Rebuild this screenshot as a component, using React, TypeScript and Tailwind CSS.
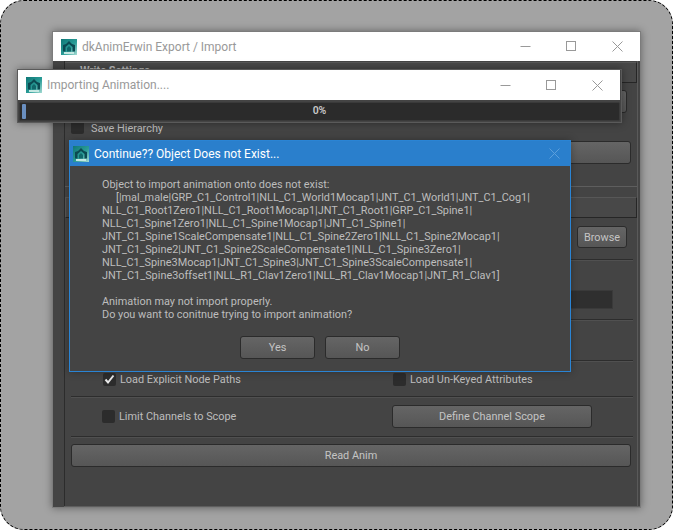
const bodyFont = "font-['Roboto','Noto_Sans',sans-serif]";

function AppIcon() {
  return (
    <svg width="16" height="16" viewBox="0 0 16 16" className="shrink-0">
      <defs>
        <linearGradient id="tealGrad" x1="0" y1="0" x2="1" y2="1">
          <stop offset="0" stopColor="#0f7776" />
          <stop offset="0.55" stopColor="#2a9c97" />
          <stop offset="1" stopColor="#a6dbd3" />
        </linearGradient>
      </defs>
      <rect width="16" height="16" fill="url(#tealGrad)" />
      <path d="M2 12.5V6l3-1 3-3 3 3 3 1v6.5h-2.5V8L8 5 4.5 8v4.5z" fill="#0c4a52" />
      <path d="M6 12.5V9l2-2 2 2v3.5z" fill="#11676a" />
      <rect x="3" y="13" width="10" height="2" fill="#c4e8e2" />
    </svg>
  );
}

function CloseGlyph({ color }: { color: string }) {
  return (
    <svg width="11" height="11" viewBox="0 0 11 11"><path d="M0.5 0.5L10.5 10.5M10.5 0.5L0.5 10.5" stroke={color} strokeWidth="1" /></svg>
  );
}

function WinControls({ color = "#999999" }: { color?: string }) {
  return (
    <div className="flex items-center">
      <div className="w-[45px] flex justify-center">
        <svg width="11" height="11" viewBox="0 0 11 11"><path d="M0.5 5.5H10.5" stroke={color} strokeWidth="1" /></svg>
      </div>
      <div className="w-[46px] flex justify-center">
        <svg width="11" height="11" viewBox="0 0 11 11"><rect x="0.5" y="0.5" width="9" height="9" fill="none" stroke={color} strokeWidth="1" /></svg>
      </div>
      <div className="w-[46px] flex justify-center">
        <CloseGlyph color={color} />
      </div>
    </div>
  );
}

function Btn({ children, className = "" }: { children?: React.ReactNode; className?: string }) {
  return (
    <div className={`flex items-center justify-center pt-[2px] rounded-[3px] border border-[#2b2b2b] bg-gradient-to-b from-[#656565] to-[#565656] text-[10.9px] text-[#c4c4c4] ${className}`}>
      {children}
    </div>
  );
}

function Check({ checked = false }: { checked?: boolean }) {
  return (
    <div className="w-[13px] h-[13px] rounded-[2px] bg-[#2c2c2c] flex items-center justify-center shrink-0">
      {checked && (
        <svg width="11" height="11" viewBox="0 0 11 11">
          <path d="M1.5 5.5L4 8.5L9.5 1.5" fill="none" stroke="#e8e8e8" strokeWidth="2" />
        </svg>
      )}
    </div>
  );
}

function Sep({ className = "" }: { className?: string }) {
  return <div className={`h-[2px] ml-[6px] mr-[4px] border-t border-[#2d2d2d] border-b-[#505050] border-b ${className}`} />;
}

const lines = [
  "NLL_C1_Root1Zero1|NLL_C1_Root1Mocap1|JNT_C1_Root1|GRP_C1_Spine1|",
  "NLL_C1_Spine1Zero1|NLL_C1_Spine1Mocap1|JNT_C1_Spine1|",
  "JNT_C1_Spine1ScaleCompensate1|NLL_C1_Spine2Zero1|NLL_C1_Spine2Mocap1|",
  "JNT_C1_Spine2|JNT_C1_Spine2ScaleCompensate1|NLL_C1_Spine3Zero1|",
  "NLL_C1_Spine3Mocap1|JNT_C1_Spine3|JNT_C1_Spine3ScaleCompensate1|",
  "JNT_C1_Spine3offset1|NLL_R1_Clav1Zero1|NLL_R1_Clav1Mocap1|JNT_R1_Clav1]",
];

export default function App() {
  return (
    <div className={`w-[673px] h-[530px] bg-white ${bodyFont}`}>
      <div className="relative w-[673px] h-[530px] rounded-[24px] border border-dashed border-black bg-[#a3a3a3] overflow-hidden">
        {/* Main window */}
        <div className="absolute left-[51px] top-[30px] w-[589px] h-[477px] flex flex-col border border-[#7c7c7c] bg-[#444444] shadow-[0_0_8px_rgba(0,0,0,0.4)]">
          <div className="h-[29px] shrink-0 bg-white flex items-center justify-between pl-[8px]">
            <div className="flex items-center gap-[5px]">
              <AppIcon />
              <span className="text-[12px] text-[#999999]">dkAnimErwin Export / Import</span>
            </div>
            <WinControls />
          </div>
          <div className="flex-1 flex flex-col ml-[11px] mr-[2px] border-l border-[#2c2c2c] border-r border-r-[#5a5a5a]">
            <div className="h-[21px] mt-[1px] bg-[#484848] border-t border-[#575757] border-b border-b-[#262626] border-r border-r-[#262626] text-[11px] font-bold text-[#bdbdbd] pl-[15px] leading-[15px]">
              Write Settings
            </div>
            <Btn className="h-[23px] mt-[7px] ml-[6px] mr-[10px]" />
            <div className="flex items-center gap-[7px] mt-[8px] ml-[6px] h-[13px] text-[10.9px] text-[#bdbdbd]">
              <Check />
              <span className="pt-[4px]">Save Hierarchy</span>
            </div>
            <Btn className="h-[23px] mt-[7px] ml-[6px] mr-[6px]" />
            <div className="h-[1px] mt-[22px] bg-[#5e5e5e]" />
            <div className="h-[21px] mt-[10px] bg-[#484848] border border-[#575757] border-b-[#262626] border-r-[#262626]" />
            <div className="flex justify-end mt-[8px] mr-[10px]">
              <Btn className="w-[50px] h-[22px]">Browse</Btn>
            </div>
            <Sep className="mt-[11px]" />
            <div className="flex justify-end mt-[29px] mr-[24px]">
              <div className="w-[300px] h-[19px] bg-[#2f2f2f] border border-[#3a3a3a]" />
            </div>
            <Sep className="mt-[10px]" />
            <Sep className="mt-[39px]" />
            <div className="flex items-center h-[13px] mt-[11px] text-[10.9px] text-[#bdbdbd]">
              <div className="flex items-center gap-[4px] ml-[38px] w-[290px]">
                <Check checked />
                <span className="pt-[2px]">Load Explicit Node Paths</span>
              </div>
              <div className="flex items-center gap-[4px]">
                <Check />
                <span className="pt-[2px]">Load Un-Keyed Attributes</span>
              </div>
            </div>
            <Sep className="mt-[10px]" />
            <div className="flex items-center mt-[7px] h-[23px] text-[10.9px] text-[#bdbdbd]">
              <div className="flex items-center gap-[4px] ml-[37px] w-[290px]">
                <Check />
                <span className="pt-[2px]">Limit Channels to Scope</span>
              </div>
              <Btn className="w-[200px] h-[23px]">Define Channel Scope</Btn>
            </div>
            <Sep className="mt-[8px]" />
            <Btn className="h-[23px] mt-[6px] ml-[6px] mr-[6px]">Read Anim</Btn>
          </div>
          <div className="h-[1px] bg-[#5e5e5e] ml-[11px]" />
        </div>

        {/* Progress window */}
        <div className="absolute left-[16px] top-[68px] w-[605px] h-[54px] flex flex-col border border-[#5a5a5a] bg-[#444444] shadow-[0_0_8px_rgba(0,0,0,0.4)]">
          <div className="h-[30px] shrink-0 bg-white flex items-center justify-between pl-[8px] mr-[1px]">
            <div className="flex items-center gap-[5px]">
              <AppIcon />
              <span className="text-[12px] text-[#999999]">Importing Animation....</span>
            </div>
            <WinControls />
          </div>
          <div className="relative flex-1 mx-[1px] mt-[2px] mb-[1px] rounded-[2px] bg-[#2b2b2b] border border-[#3a3a3a] flex items-center justify-center">
            <span className="text-[10.5px] font-semibold text-[#c8c8c8] -mt-[1px]">0%</span>
            <div className="absolute left-[2px] top-[1px] bottom-[1px] w-[4px] rounded-[1px] bg-[#6a8fc0]" />
          </div>
        </div>

        {/* Dialog */}
        <div className="absolute left-[68px] top-[139px] w-[502px] h-[232px] flex flex-col border border-[#2a84d4] bg-[#444444] shadow-[0_0_8px_rgba(0,0,0,0.3)]">
          <div className="h-[25px] shrink-0 bg-[#2a7fcc] flex items-center justify-between pl-[3px]">
            <div className="flex items-center gap-[5px]">
              <AppIcon />
              <span className="text-[12px] text-white">Continue?? Object Does not Exist...</span>
            </div>
            <div className="mr-[10px]">
              <CloseGlyph color="#5b9fdc" />
            </div>
          </div>
          <div className="pl-[32px] pt-[12px] text-[10.9px] leading-[13px] text-[#bdbdbd] whitespace-pre">
            <div>Object to import animation onto does not exist:</div>
            <div className="pl-[14px]">[|mal_male|GRP_C1_Control1|NLL_C1_World1Mocap1|JNT_C1_World1|JNT_C1_Cog1|</div>
            {lines.map((l) => (
              <div key={l}>{l}</div>
            ))}
            <div className="h-[13px]" />
            <div>Animation may not import properly.</div>
            <div>Do you want to conitnue trying to import animation?</div>
          </div>
          <div className="flex gap-[10px] ml-[170px] mt-[15px]">
            <Btn className="w-[75px] h-[23px]">Yes</Btn>
            <Btn className="w-[75px] h-[23px]">No</Btn>
          </div>
        </div>
      </div>
    </div>
  );
}
